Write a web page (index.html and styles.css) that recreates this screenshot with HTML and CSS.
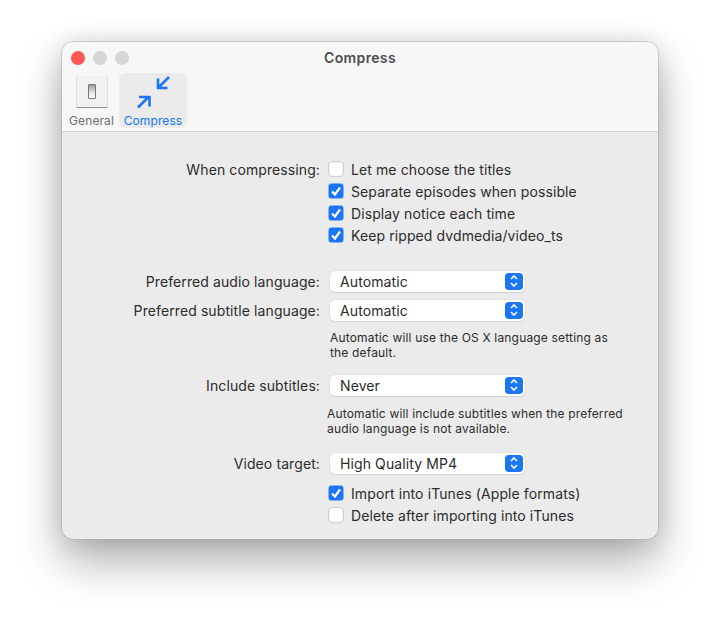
FILE: index.html
```html
<!DOCTYPE html>
<html lang="en">
<head>
<meta charset="utf-8">
<title>Compress</title>
<link rel="stylesheet" href="styles.css">
</head>
<body>
<div class="window">
  <header class="titlebar">
    <div class="top">
      <div class="lights"><span class="light red"></span><span class="light grey"></span><span class="light grey"></span></div>
      <div class="title">Compress</div>
    </div>
    <div class="tabs">
      <div class="tab">
        <div class="switch"><span class="toggle"></span></div>
        <span class="tab-label">General</span>
      </div>
      <div class="tab active">
        <svg class="compress-icon" width="40" height="38" viewBox="0 0 40 38" fill="none" stroke="#1a76f2" stroke-width="2.6">
          <path d="M35 3 L24.500 13.500 M24 4.500 V14 H33.500"/>
          <path d="M4 33.500 L14.500 23 M5 23 H15.500 V32.500"/>
        </svg>
        <span class="tab-label">Compress</span>
      </div>
    </div>
  </header>
  <main class="content">
    <div class="row check-row">
      <span class="label">When compressing:</span>
      <span class="check"></span><span class="text">Let me choose the titles</span>
    </div>
    <div class="row check-row">
      <span class="label"></span>
      <span class="check on"><svg viewBox="0 0 16 16" width="16" height="16"><path d="M4 8.500 L7 11.500 L12 4.500" fill="none" stroke="#fff" stroke-width="2.200"/></svg></span><span class="text">Separate episodes when possible</span>
    </div>
    <div class="row check-row">
      <span class="label"></span>
      <span class="check on"><svg viewBox="0 0 16 16" width="16" height="16"><path d="M4 8.500 L7 11.500 L12 4.500" fill="none" stroke="#fff" stroke-width="2.200"/></svg></span><span class="text">Display notice each time</span>
    </div>
    <div class="row check-row">
      <span class="label"></span>
      <span class="check on"><svg viewBox="0 0 16 16" width="16" height="16"><path d="M4 8.500 L7 11.500 L12 4.500" fill="none" stroke="#fff" stroke-width="2.200"/></svg></span><span class="text">Keep ripped dvdmedia/video_ts</span>
    </div>

    <div class="row select-row audio">
      <span class="label">Preferred audio language:</span>
      <div class="select"><span>Automatic</span><span class="stepper"><svg viewBox="0 0 16 18" width="16" height="18"><path d="M5 7 L8 4 L11 7 M5 11 L8 14 L11 11" fill="none" stroke="#fff" stroke-width="1.600"/></svg></span></div>
    </div>
    <div class="row select-row subtitle">
      <span class="label">Preferred subtitle language:</span>
      <div class="select"><span>Automatic</span><span class="stepper"><svg viewBox="0 0 16 18" width="16" height="18"><path d="M5 7 L8 4 L11 7 M5 11 L8 14 L11 11" fill="none" stroke="#fff" stroke-width="1.600"/></svg></span></div>
    </div>
    <p class="note note-lang">Automatic will use the OS X language setting as the default.</p>

    <div class="row select-row include">
      <span class="label">Include subtitles:</span>
      <div class="select"><span>Never</span><span class="stepper"><svg viewBox="0 0 16 18" width="16" height="18"><path d="M5 7 L8 4 L11 7 M5 11 L8 14 L11 11" fill="none" stroke="#fff" stroke-width="1.600"/></svg></span></div>
    </div>
    <p class="note note-sub">Automatic will include subtitles when the preferred audio language is not available.</p>

    <div class="row select-row video">
      <span class="label">Video target:</span>
      <div class="select"><span>High Quality MP4</span><span class="stepper"><svg viewBox="0 0 16 18" width="16" height="18"><path d="M5 7 L8 4 L11 7 M5 11 L8 14 L11 11" fill="none" stroke="#fff" stroke-width="1.600"/></svg></span></div>
    </div>
    <div class="row check-row import">
      <span class="label"></span>
      <span class="check on"><svg viewBox="0 0 16 16" width="16" height="16"><path d="M4 8.500 L7 11.500 L12 4.500" fill="none" stroke="#fff" stroke-width="2.200"/></svg></span><span class="text">Import into iTunes (Apple formats)</span>
    </div>
    <div class="row check-row">
      <span class="label"></span>
      <span class="check"></span><span class="text">Delete after importing into iTunes</span>
    </div>
  </main>
</div>
</body>
</html>
```
FILE: styles.css
```css
* { box-sizing: border-box; }
html, body { margin: 0; height: 620px; overflow: hidden; background: #fff; }
body {
  padding: 42px 62px 0;
  font-family: Inter, "Liberation Sans", sans-serif;
  font-size: 14px;
  letter-spacing: .1px;
  color: #2c2c2c;
}
.window {
  display: flex;
  flex-direction: column;
  width: 596px;
  height: 497px;
  border-radius: 11px;
  overflow: hidden;
  background: #ebebeb;
  box-shadow: 0 0 0 0.5px #a9a9a9, 0 22px 45px rgba(0,0,0,.32), 0 0 24px rgba(0,0,0,.12);
}
.titlebar {
  height: 90px;
  background: #f7f7f7;
  border-bottom: 1px solid #cfcfcf;
  padding: 9px 9px 0;
}
.top { position: relative; height: 14px; display: flex; align-items: center; }
.lights { display: flex; gap: 8px; }
.light { width: 14px; height: 14px; border-radius: 50%; }
.red { background: #fc5753; }
.grey { background: #d6d6d6; }
.title {
  position: absolute; left: 0; right: 0; top: -1px; text-align: center;
  font-weight: 600; font-size: 14px; line-height: 16px; letter-spacing: .35px; color: #4c4c4c;
}
.tabs { display: flex; margin-top: 8px; margin-left: -3.500px; }
.tab {
  width: 48px; height: 55px; display: flex; flex-direction: column; align-items: center;
  justify-content: flex-end;
}
.tab.active { width: 68px; margin-left: 3.500px; background: #ebebeb; border-radius: 6px; }
.tab-label { font-size: 12px; line-height: 15px; color: #6e6e6e; white-space: nowrap; }
.active .tab-label { color: #1a76f2; }
.switch {
  width: 32px; height: 32px; margin-bottom: 5px; background: #f1f1f1;
  border-bottom: 1px solid #8f8f8f; border-left: 1px solid #e0e0e0; border-right: 1px solid #e0e0e0;
  display: flex; align-items: center; justify-content: center;
}
.toggle {
  width: 8px; height: 15px; border: 1px solid #777; border-radius: 1px;
  background: linear-gradient(#9a9a9a, #e8e8e8 60%, #fff);
}
.compress-icon { margin-bottom: 1px; margin-left: 2px; }
.content { padding: 26px 0 0; flex: 1; }
.row { display: flex; align-items: center; height: 22px; }
.label { width: 258px; text-align: right; white-space: nowrap; flex: none; }
.check {
  flex: none; width: 16px; height: 16px; margin-left: 8px; border-radius: 4px;
  background: #fff; border: 1px solid #cdcdcd; box-shadow: inset 0 0 0 .5px #eee;
  display: block;
}
.check.on { background: #1a76f2; border: 0; }
.check svg { display: block; }
.text { margin-left: 7px; white-space: nowrap; }
.select-row { height: 24px; }
.select {
  margin-left: 10px; width: 195px; height: 21px; background: #fff; border-radius: 5px;
  box-shadow: 0 0 0 .5px #d8d8d8, 0 1px 1px rgba(0,0,0,.12);
  display: flex; align-items: center; justify-content: space-between; padding: 0 2px 0 10px;
}
.stepper {
  width: 18px; height: 17px; border-radius: 4px; background: #1a76f2;
  display: flex; align-items: center; justify-content: center;
}
.stepper svg { display: block; }
.audio { margin-top: 23px; }
.subtitle { margin-top: 5px; }
.note {
  margin: 0 0 0 268px; width: 300px; font-size: 12px; letter-spacing: .17px; line-height: 15px; color: #2c2c2c;
}
.note-lang { margin-top: 8px; }
.include { margin-top: 13px; }
.note-sub { margin: 9px 0 0 265px; width: 310px; }
.video { margin-top: 15px; }
.import { margin-top: 7px; }
```
